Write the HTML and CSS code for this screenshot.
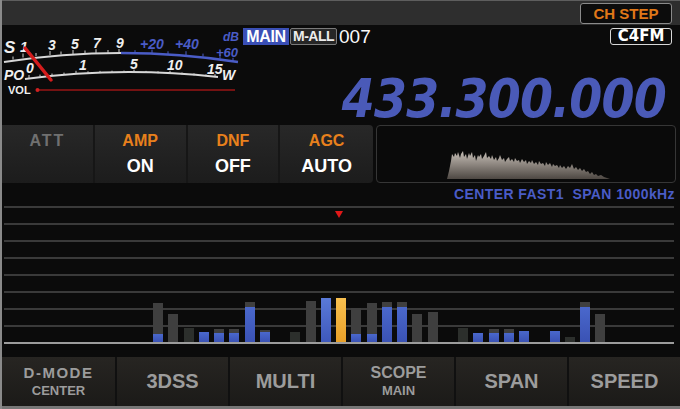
FILE: index.html
```html
<!DOCTYPE html>
<html>
<head>
<meta charset="utf-8">
<link rel="stylesheet" href="styles.css">
</head>
<body>
<div class="screen">
  <div class="topbar"><div class="chstep">CH STEP</div></div>

  <div class="header">
    <svg class="meter" width="238" height="99" viewBox="2 25 238 99">
      <path d="M4 62 Q62.5 53 121 53" class="arc-w"/>
      <path d="M121 53 Q179.5 53 238 62" class="arc-b"/>
      <g class="tick-w">
        <path d="M13 59.5v-3M23 57.5v-4M36 56v-3M50 55v-4M61 54.5v-3M73 54v-4M85 53.5v-3M96 53.2v-4M108 53v-3M119 53v-4"/>
      </g>
      <g class="tick-b">
        <path d="M135 53.2v-3M152 53.6v-4M168 54.3v-3M186 55.2v-4M203 56.6v-3M220 58.6v-4M233 60.8v-3"/>
      </g>
      <path d="M25 79 Q120 66 218 77" class="arc-w"/>
      <g class="tick-w">
        <path d="M29 78v-3M40 76.6v-2M52 75.5v-2M64 74.6v-2M76 73.8v-3M88 73.3v-2M100 72.9v-2M112 72.7v-2M124 72.6v-2M134 72.6v-3M146 72.9v-2M158 73.3v-2M170 73.8v-3M182 74.5v-2M194 75.4v-2M206 76.4v-2M215 77.2v-3"/>
      </g>
      <text x="4" y="53" class="ms big">S</text>
      <text x="20" y="52" class="ms">1</text>
      <text x="48" y="50" class="ms">3</text>
      <text x="71" y="48.5" class="ms">5</text>
      <text x="93" y="47.5" class="ms">7</text>
      <text x="116" y="47.5" class="ms">9</text>
      <text x="140" y="49" class="ms blue">+20</text>
      <text x="175" y="49" class="ms blue">+40</text>
      <text x="223" y="40.5" class="ms blue sm">dB</text>
      <text x="216" y="57" class="ms blue md">+60</text>
      <text x="4" y="80" class="ms">PO</text>
      <text x="26" y="73" class="ms">0</text>
      <text x="79" y="70" class="ms">1</text>
      <text x="130" y="69" class="ms">5</text>
      <text x="167" y="70" class="ms">10</text>
      <text x="207" y="74" class="ms">15</text>
      <text x="222" y="80" class="ms">W</text>
      <text x="8" y="94" class="vol">VOL</text>
      <line x1="37" y1="90" x2="235" y2="90" class="volline"/>
      <circle cx="37.5" cy="90" r="2" fill="#d02020"/>
      <line x1="25" y1="48" x2="51" y2="80" class="needle"/>
    </svg>
    <div class="hright">
      <div class="status">
        <div class="badges">
          <span class="b-main">MAIN</span>
          <span class="b-mall">M-ALL</span>
          <span class="chno">007</span>
        </div>
        <span class="c4fm">C4FM</span>
      </div>
      <div class="freq">433.300.000</div>
    </div>
  </div>

  <div class="funcrow">
    <div class="funcbar">
      <div class="fcell"><span class="flabel off">ATT</span></div>
      <div class="fcell"><span class="flabel">AMP</span><span class="fval">ON</span></div>
      <div class="fcell"><span class="flabel">DNF</span><span class="fval">OFF</span></div>
      <div class="fcell"><span class="flabel">AGC</span><span class="fval">AUTO</span></div>
    </div>
    <div class="minisc">
      <svg width="298" height="56" viewBox="377 125 298 56" class="spec">
        <defs>
          <linearGradient id="sg" x1="0" y1="0" x2="0" y2="1">
            <stop offset="0" stop-color="#c8c0b8"/>
            <stop offset="1" stop-color="#4e4843"/>
          </linearGradient>
        </defs>
        <path fill="url(#sg)" d="M447 178 L449 170 L451 160 L452 153 L454 156 L455 152 L457 155 L458 151 L460 157 L461 153 L463 150 L464 156 L466 153 L467 158 L469 152 L470 155 L472 151 L473 157 L475 154 L476 160 L478 154 L479 156 L481 153 L482 158 L484 155 L486 151 L487 157 L489 155 L491 158 L492 154 L494 159 L496 156 L497 160 L499 157 L500 154 L502 159 L504 157 L505 161 L507 158 L509 156 L510 160 L512 158 L514 161 L515 157 L517 160 L519 159 L520 162 L522 158 L524 161 L526 159 L527 163 L529 160 L531 162 L532 159 L534 163 L536 161 L538 164 L539 160 L541 163 L543 162 L545 165 L546 161 L548 164 L550 162 L552 166 L553 163 L555 165 L557 164 L559 167 L560 164 L562 167 L564 165 L566 168 L568 165 L570 167 L572 163 L574 168 L576 166 L578 169 L580 167 L582 170 L584 168 L586 171 L588 170 L590 173 L592 171 L594 174 L596 173 L598 175 L601 174 L604 176 L607 177 L610 178 Z"/>
      </svg>
    </div>
  </div>

  <div class="scinfo">CENTER FAST1&nbsp; SPAN 1000kHz</div>

  <div class="chart">
    <span class="marker"></span>
    <div class="plot">
      <div class="bar"><div class="g" style="height:31px"></div><div class="b" style="height:8px"></div></div>
      <div class="bar"><div class="g" style="height:28px"></div></div>
      <div class="bar"><div class="d" style="height:14px"></div></div>
      <div class="bar"><div class="b" style="height:10px"></div></div>
      <div class="bar"><div class="g" style="height:4px"></div><div class="b" style="height:9px"></div></div>
      <div class="bar"><div class="g" style="height:4px"></div><div class="b" style="height:9px"></div></div>
      <div class="bar"><div class="g" style="height:5px"></div><div class="b" style="height:35px"></div></div>
      <div class="bar"><div class="g" style="height:2px"></div><div class="b" style="height:10px"></div></div>
      <div class="bar"></div>
      <div class="bar"><div class="d" style="height:10px"></div></div>
      <div class="bar"><div class="g" style="height:41px"></div></div>
      <div class="bar"><div class="b lt" style="height:44px"></div></div>
      <div class="bar"><div class="o" style="height:44px"></div></div>
      <div class="bar"><div class="g" style="height:26px"></div><div class="b" style="height:8px"></div></div>
      <div class="bar"><div class="g" style="height:31px"></div><div class="b" style="height:8px"></div></div>
      <div class="bar"><div class="g" style="height:5px"></div><div class="b" style="height:35px"></div></div>
      <div class="bar"><div class="g" style="height:5px"></div><div class="b" style="height:35px"></div></div>
      <div class="bar"><div class="g" style="height:28px"></div></div>
      <div class="bar"><div class="g" style="height:30px"></div></div>
      <div class="bar"></div>
      <div class="bar"><div class="d" style="height:14px"></div></div>
      <div class="bar"><div class="b" style="height:9px"></div></div>
      <div class="bar"><div class="g" style="height:4px"></div><div class="b" style="height:9px"></div></div>
      <div class="bar"><div class="g" style="height:4px"></div><div class="b" style="height:9px"></div></div>
      <div class="bar"><div class="b" style="height:11px"></div></div>
      <div class="bar"></div>
      <div class="bar"><div class="b" style="height:11px"></div></div>
      <div class="bar"><div class="d" style="height:5px"></div></div>
      <div class="bar"><div class="g" style="height:5px"></div><div class="b" style="height:35px"></div></div>
      <div class="bar"><div class="g" style="height:28px"></div></div>
    </div>
  </div>

  <div class="softkeys">
    <div class="sk"><span class="l1">D-MODE</span><span class="l2">CENTER</span></div>
    <div class="sk"><span>3DSS</span></div>
    <div class="sk"><span>MULTI</span></div>
    <div class="sk"><span class="l1 scope">SCOPE</span><span class="l2">MAIN</span></div>
    <div class="sk"><span>SPAN</span></div>
    <div class="sk"><span>SPEED</span></div>
  </div>
</div>
</body>
</html>
```

FILE: styles.css
```css
html, body {
  margin: 0;
  padding: 0;
  background: #0a0a0a;
}

.screen {
  width: 680px;
  height: 409px;
  box-sizing: border-box;
  border-left: 2px solid #8a8a8a;
  background: #0b0b0b;
  overflow: hidden;
  font-family: "Liberation Sans", Arial, sans-serif;
  display: flex;
  flex-direction: column;
}

/* top bar */
.topbar {
  height: 25px;
  flex: none;
  box-sizing: border-box;
  border-top: 1px solid #5e5e5e;
  background: #2e2e2e;
  display: flex;
  justify-content: flex-end;
  align-items: flex-start;
  padding: 2px 8px 0 0;
}

.chstep {
  width: 92px;
  height: 21px;
  box-sizing: border-box;
  border: 1px solid #8a8a8a;
  border-radius: 3px;
  background: #0c0c0c;
  color: #e07818;
  font-weight: bold;
  font-size: 15px;
  display: flex;
  align-items: center;
  justify-content: center;
}

/* header */
.header {
  height: 99px;
  flex: none;
  display: flex;
}

.meter {
  flex: none;
  display: block;
}

.arc-w { fill: none; stroke: #d8d8d8; stroke-width: 2; }
.arc-b { fill: none; stroke: #4a5cc6; stroke-width: 2.5; }
.tick-w path { stroke: #cfcfcf; stroke-width: 1; }
.tick-b path { stroke: #4a5cc6; stroke-width: 1; }

.ms {
  font-family: "Liberation Sans", Arial, sans-serif;
  font-weight: bold;
  font-style: italic;
  font-size: 14px;
  fill: #f0f0f0;
}
.ms.big { font-size: 17px; }
.ms.blue { fill: #4a5cc6; }
.ms.sm { font-size: 12px; }
.ms.md { font-size: 13px; }
.vol {
  font-family: "Liberation Sans", Arial, sans-serif;
  font-weight: bold;
  font-size: 11px;
  fill: #f0f0f0;
}
.volline { stroke: #9a1616; stroke-width: 1.5; }
.needle { stroke: #d41c1c; stroke-width: 3.5; stroke-linecap: round; }

.hright {
  flex: 1;
  padding: 3px 8px 0 3px;
}

.status {
  display: flex;
  justify-content: space-between;
  align-items: center;
  height: 17px;
}

.badges {
  display: flex;
  align-items: center;
}

.b-main {
  background: #3a4fb6;
  color: #fff;
  font-weight: bold;
  font-size: 16px;
  height: 17px;
  line-height: 17px;
  width: 46px;
  text-align: center;
  letter-spacing: -0.3px;
}

.b-mall {
  box-sizing: border-box;
  width: 47px;
  height: 17px;
  line-height: 15px;
  margin-left: 1px;
  background: #262626;
  border: 1px solid #7a7a7a;
  border-radius: 2px;
  color: #ececec;
  font-weight: bold;
  font-size: 14px;
  text-align: center;
  letter-spacing: -0.5px;
}

.chno {
  margin-left: 2px;
  font-size: 19px;
  line-height: 17px;
  color: #fafafa;
}

.c4fm {
  box-sizing: border-box;
  width: 62px;
  height: 17px;
  border: 1.5px solid #d8d8d8;
  border-radius: 3px;
  background: #0c0c0c;
  color: #fff;
  font-family: "DejaVu Sans", sans-serif;
  font-weight: bold;
  font-size: 15px;
  line-height: 14px;
  text-align: center;
}

.freq {
  margin-top: 27px;
  padding-right: 7px;
  text-align: right;
  color: #4a5ab8;
  font-family: "DejaVu Sans", sans-serif;
  font-style: italic;
  font-weight: bold;
  font-size: 54px;
  line-height: 54px;
  letter-spacing: -1px;
  transform: scaleX(0.88);
  transform-origin: right center;
}

/* function row */
.funcrow {
  height: 59px;
  flex: none;
  box-sizing: border-box;
  display: flex;
  gap: 3px;
  padding: 1px 4px 0 0;
}

.funcbar {
  width: 371px;
  height: 58px;
  display: grid;
  grid-template-columns: repeat(4, 1fr);
  background: linear-gradient(#282828, #1c1c1c);
  border-radius: 0 4px 4px 0;
}

.fcell {
  display: flex;
  flex-direction: column;
  align-items: center;
  padding-top: 8px;
  border-right: 2px solid #161616;
}
.fcell:last-child { border-right: none; }

.flabel {
  font-size: 16px;
  font-weight: bold;
  line-height: 16px;
  color: #e8801c;
}
.flabel.off {
  color: #707070;
  letter-spacing: 2px;
}

.fval {
  margin-top: 8px;
  font-size: 18px;
  font-weight: bold;
  line-height: 18px;
  color: #fff;
}

.minisc {
  flex: 1;
  height: 58px;
  box-sizing: border-box;
  border: 1px solid #363636;
  border-radius: 4px;
  background: #0a0a0a;
}
.spec { display: block; }

/* scope info */
.scinfo {
  height: 22px;
  flex: none;
  padding-right: 5px;
  text-align: right;
  color: #4a5cc6;
  font-weight: bold;
  font-size: 14px;
  line-height: 23px;
  letter-spacing: 0.4px;
}

/* chart */
.chart {
  height: 152px;
  flex: none;
  box-sizing: border-box;
  position: relative;
  padding: 1px 6px 0 2px;
}

.marker {
  position: absolute;
  left: 333px;
  top: 6px;
  width: 0;
  height: 0;
  border-left: 4px solid transparent;
  border-right: 4px solid transparent;
  border-top: 7px solid #e01818;
}

.plot {
  height: 138px;
  box-sizing: border-box;
  border-bottom: 2px solid #9c9c9c;
  background: repeating-linear-gradient(to bottom, #3a3a3a 0 2px, transparent 2px 17px);
  display: flex;
  align-items: flex-end;
  gap: 5.25px;
  padding-left: 149px;
}

.bar {
  width: 10px;
  flex: none;
  display: flex;
  flex-direction: column;
}
.bar .g { background: #3f3f3f; }
.bar .d { background: #2c2f2c; }
.bar .b { background: linear-gradient(#4a68cc, #3a52b4); }
.bar .b.lt { background: linear-gradient(#5a7ad8, #3e58bc); }
.bar .o { background: linear-gradient(#f8c050, #e8a028); }

/* soft keys */
.softkeys {
  height: 52px;
  flex: none;
  box-sizing: border-box;
  border-bottom: 3px solid #777;
  display: grid;
  grid-template-columns: repeat(6, 1fr);
  background: linear-gradient(#272522, #1b1a18);
}

.sk {
  display: flex;
  flex-direction: column;
  align-items: center;
  justify-content: center;
  color: #9c9c9c;
  font-weight: bold;
  font-size: 20px;
  border-left: 2px solid #101010;
}
.sk:first-child { border-left: none; }

.sk .l1 {
  font-size: 15px;
  line-height: 15px;
  letter-spacing: 1.5px;
}
.sk .l1.scope {
  font-size: 16px;
  letter-spacing: 0;
}
.sk .l2 {
  font-size: 13px;
  line-height: 14px;
  margin-top: 4px;
}
```
